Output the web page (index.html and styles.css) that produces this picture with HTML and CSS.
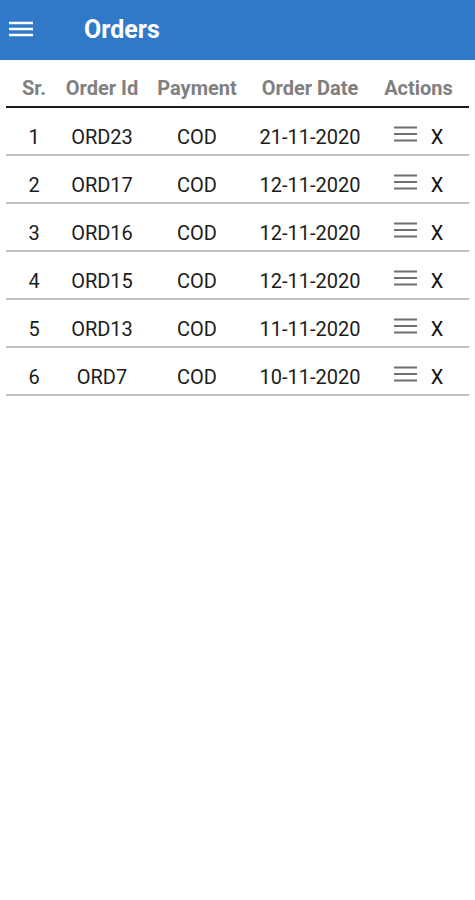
FILE: index.html
```html
<!DOCTYPE html>
<html lang="en">
<head>
    <meta charset="UTF-8">
    <title>Orders</title>
    <link rel="stylesheet" href="styles.css">
</head>
<body>
<div id="top-bar">
    <span id="menu-btn">
        <svg width="24" height="18" viewBox="0 0 24 18"><path d="M0 3H24M0 9H24M0 15H24" stroke="#fff" stroke-width="2.6"/></svg>
    </span>
    <span id="title">Orders</span>
</div>
<div id="orders">
    <div class="row head">
        <span>Sr.</span>
        <span>Order Id</span>
        <span>Payment</span>
        <span>Order Date</span>
        <span>Actions</span>
    </div>
    <div class="row">
        <span>1</span><span>ORD23</span><span>COD</span><span>21-11-2020</span>
        <span class="actions"><svg class="lines" width="23" height="16" viewBox="0 0 23 16"><path d="M0 1.5H23M0 8H23M0 14.5H23" stroke="#6f6f6f" stroke-width="2.2"/></svg><span class="del">X</span></span>
    </div>
    <div class="row">
        <span>2</span><span>ORD17</span><span>COD</span><span>12-11-2020</span>
        <span class="actions"><svg class="lines" width="23" height="16" viewBox="0 0 23 16"><path d="M0 1.5H23M0 8H23M0 14.5H23" stroke="#6f6f6f" stroke-width="2.2"/></svg><span class="del">X</span></span>
    </div>
    <div class="row">
        <span>3</span><span>ORD16</span><span>COD</span><span>12-11-2020</span>
        <span class="actions"><svg class="lines" width="23" height="16" viewBox="0 0 23 16"><path d="M0 1.5H23M0 8H23M0 14.5H23" stroke="#6f6f6f" stroke-width="2.2"/></svg><span class="del">X</span></span>
    </div>
    <div class="row">
        <span>4</span><span>ORD15</span><span>COD</span><span>12-11-2020</span>
        <span class="actions"><svg class="lines" width="23" height="16" viewBox="0 0 23 16"><path d="M0 1.5H23M0 8H23M0 14.5H23" stroke="#6f6f6f" stroke-width="2.2"/></svg><span class="del">X</span></span>
    </div>
    <div class="row">
        <span>5</span><span>ORD13</span><span>COD</span><span>11-11-2020</span>
        <span class="actions"><svg class="lines" width="23" height="16" viewBox="0 0 23 16"><path d="M0 1.5H23M0 8H23M0 14.5H23" stroke="#6f6f6f" stroke-width="2.2"/></svg><span class="del">X</span></span>
    </div>
    <div class="row">
        <span>6</span><span>ORD7</span><span>COD</span><span>10-11-2020</span>
        <span class="actions"><svg class="lines" width="23" height="16" viewBox="0 0 23 16"><path d="M0 1.5H23M0 8H23M0 14.5H23" stroke="#6f6f6f" stroke-width="2.2"/></svg><span class="del">X</span></span>
    </div>
</div>
</body>
</html>
```
FILE: styles.css
```css
*{
    margin: 0;
    padding: 0;
    box-sizing: border-box;
}
body{
    font-family: Roboto, "Liberation Sans", sans-serif;
    background: #fff;
    color: #1c1c1c;
}

#top-bar{
    height: 60px;
    background: #3079c9;
    display: flex;
    align-items: center;
}
#menu-btn{
    display: flex;
    margin-left: 9px;
    margin-top: -2px;
}
#title{
    margin-left: 51px;
    color: #fff;
    font-size: 25px;
    font-weight: bold;
    margin-top: -1px;
}

#orders{
    margin: 0 6px;
}
.row{
    display: grid;
    grid-template-columns: 56px 80px 110px 116px 1fr;
    height: 48px;
    padding-top: 18px;
    border-bottom: 2px solid #c2c2c2;
    font-size: 20px;
    line-height: 23px;
}
.row > span{
    text-align: center;
    white-space: nowrap;
}
.row.head{
    padding-top: 17px;
    border-bottom: 2px solid #1a1a1a;
    color: #808080;
    font-weight: bold;
}
.actions{
    display: flex;
    justify-content: center;
    align-items: flex-start;
    gap: 14px;
}
.del{
    color: #111;
}
```
